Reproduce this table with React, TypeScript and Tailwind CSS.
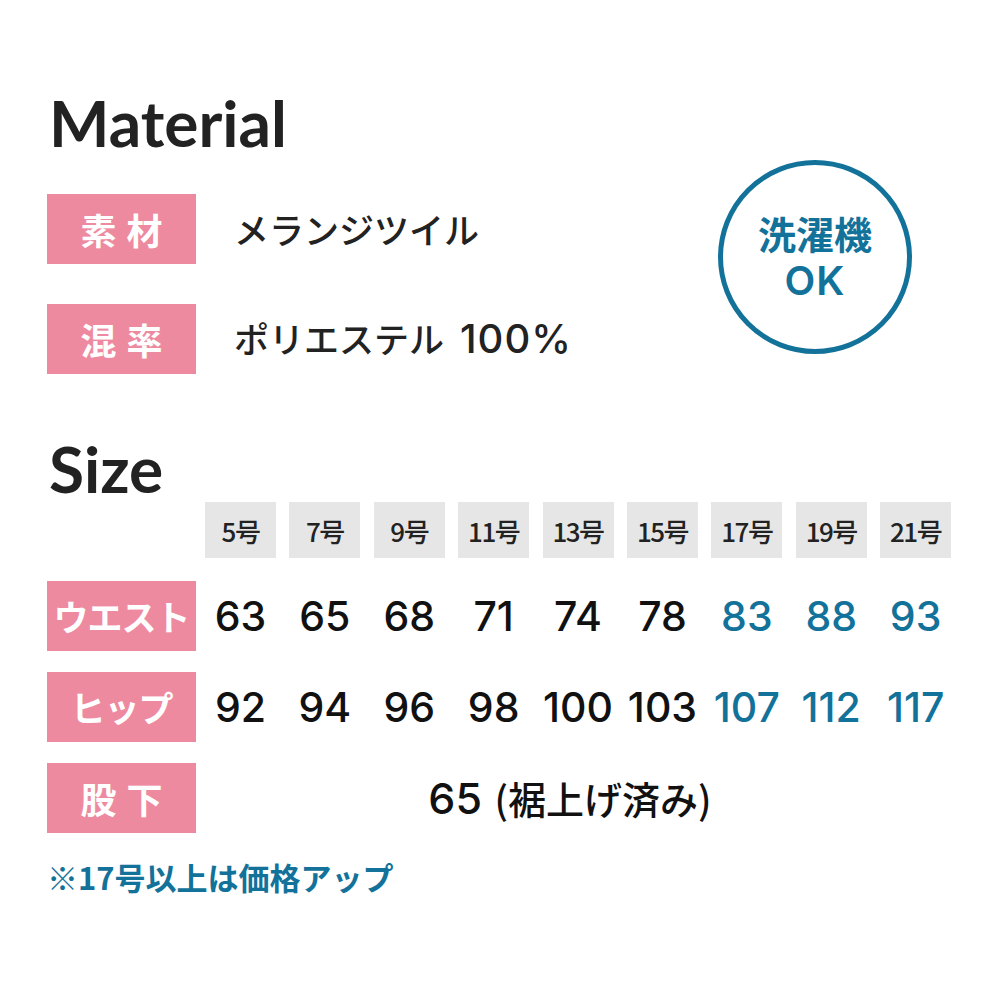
const jp = { fontFamily: '"Noto Sans CJK JP", "Noto Sans", sans-serif' };
const num = { fontFamily: 'Inter, "Noto Sans CJK JP", sans-serif' };

const sizes = ["5号", "7号", "9号", "11号", "13号", "15号", "17号", "19号", "21号"];
const waist = ["63", "65", "68", "71", "74", "78", "83", "88", "93"];
const hip = ["92", "94", "96", "98", "100", "103", "107", "112", "117"];

const Label = ({ text, wide }: { text: string; wide?: boolean }) => (
  <div
    className={`w-[149px] h-[70px] bg-[#ee8aa0] text-white flex items-center justify-center font-bold ${wide ? "text-[35px] tracking-[-1px]" : "text-[36px] tracking-[10px] pl-[10px]"}`}
    style={jp}
  >
    {text}
  </div>
);

const NumRow = ({ label, values }: { label: string; values: string[] }) => (
  <div className="grid grid-cols-[158px_repeat(9,84.4px)] items-center">
    <Label text={label} wide />
    {values.map((v, i) => (
      <div
        key={v + i}
        className={`w-[71px] flex justify-center whitespace-nowrap text-[41px] leading-[70px] font-medium ${i >= 6 ? "text-[#13729a]" : "text-[#111]"}`}
        style={num}
      >
        {v}
      </div>
    ))}
  </div>
);

export default function App() {
  return (
    <div className="w-[1000px] h-[1000px] bg-white pl-[47px] pt-[91px]" style={jp}>
      <h1 className="text-[64px] leading-[64px] font-bold text-[#222] ml-[2px]" style={{ fontFamily: "Lato, sans-serif" }}>
        Material
      </h1>

      <div className="flex items-start justify-between w-[865px] mt-[5px]">
        <div className="flex flex-col gap-[40px] mt-[34px]">
          <div className="flex items-center gap-[38px]">
            <Label text="素材" />
            <span className="text-[35px] font-medium text-[#222]">メランジツイル</span>
          </div>
          <div className="flex items-center gap-[38px]">
            <Label text="混率" />
            <span className="text-[35px] font-medium text-[#222]">
              ポリエステル<span className="ml-[16px] text-[40px] tracking-[1px]" style={num}>100%</span>
            </span>
          </div>
        </div>
        <div className="w-[194px] h-[194px] rounded-full border-[5px] border-[#13729a] flex flex-col items-center justify-center gap-[12px] text-[#13729a]">
          <span className="text-[38px] leading-[36px] font-bold">洗濯機</span>
          <span className="text-[40px] leading-[36px] font-semibold tracking-[1px]" style={num}>OK</span>
        </div>
      </div>

      <h2 className="text-[64px] leading-[64px] font-bold text-[#222] mt-[63px] ml-[2px]" style={{ fontFamily: "Lato, sans-serif" }}>
        Size
      </h2>

      <div className="grid grid-cols-[158px_repeat(9,84.4px)] mt-[1px]">
        <div />
        {sizes.map((s) => (
          <div key={s} className="w-[71px] h-[56px] bg-[#e6e6e6] flex items-center justify-center text-[26px] font-medium text-[#222] tracking-[-1.5px]">
            {s}
          </div>
        ))}
      </div>

      <div className="flex flex-col gap-[21px] mt-[23px]">
        <NumRow label="ウエスト" values={waist} />
        <NumRow label="ヒップ" values={hip} />
        <div className="flex items-center">
          <Label text="股下" />
          <div className="w-[760px] pr-[12px] text-center text-[38px] leading-[70px] font-medium text-[#111]">
            <span className="text-[43px] mr-[4px]" style={num}>65</span> (裾上げ済み)
          </div>
        </div>
      </div>

      <p className="mt-[26px] text-[31px] leading-[36px] font-bold text-[#13729a]">※17号以上は価格アップ</p>
    </div>
  );
}
